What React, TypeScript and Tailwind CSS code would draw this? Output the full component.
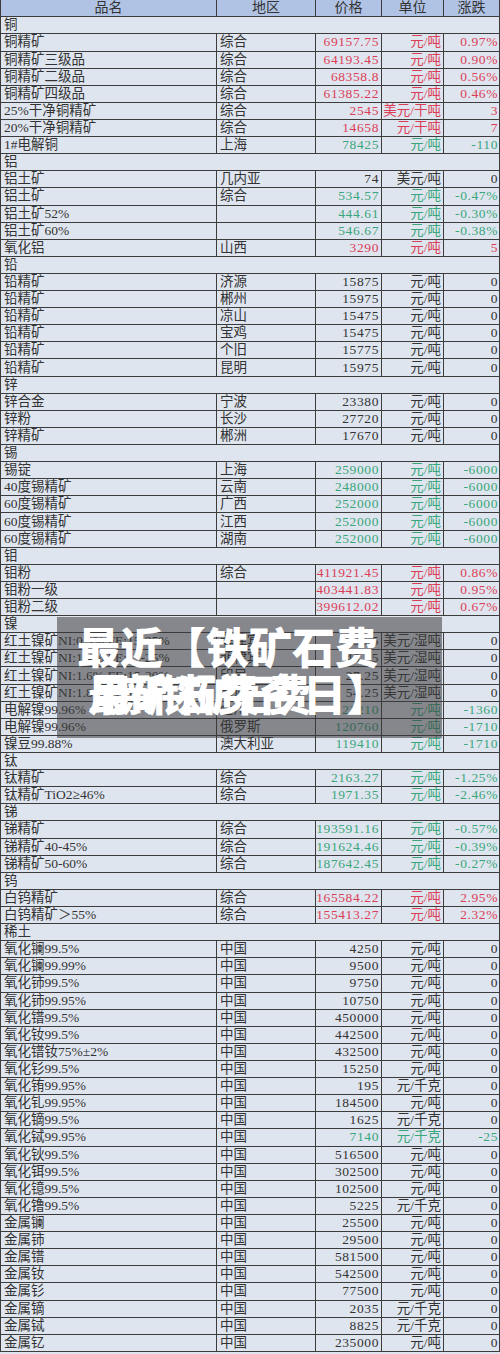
type Tone = "up" | "down" | "flat";

interface Item {
  name: string;
  region: string;
  price: string;
  unit: string;
  change: string;
  tone: Tone;
}

interface Group {
  title: string;
  items: Item[];
}

const t = (name: string, region: string, price: string, unit: string, change: string, tone: Tone = "flat"): Item => ({
  name,
  region,
  price,
  unit,
  change,
  tone,
});

const groups: Group[] = [
  {
    title: "铜",
    items: [
      t("铜精矿", "综合", "69157.75", "元/吨", "0.97%", "up"),
      t("铜精矿三级品", "综合", "64193.45", "元/吨", "0.90%", "up"),
      t("铜精矿二级品", "综合", "68358.8", "元/吨", "0.56%", "up"),
      t("铜精矿四级品", "综合", "61385.22", "元/吨", "0.46%", "up"),
      t("25%干净铜精矿", "综合", "2545", "美元/干吨", "3", "up"),
      t("20%干净铜精矿", "综合", "14658", "元/干吨", "7", "up"),
      t("1#电解铜", "上海", "78425", "元/吨", "-110", "down"),
    ],
  },
  {
    title: "铝",
    items: [
      t("铝土矿", "几内亚", "74", "美元/吨", "0"),
      t("铝土矿", "综合", "534.57", "元/吨", "-0.47%", "down"),
      t("铝土矿52%", "", "444.61", "元/吨", "-0.30%", "down"),
      t("铝土矿60%", "", "546.67", "元/吨", "-0.38%", "down"),
      t("氧化铝", "山西", "3290", "元/吨", "5", "up"),
    ],
  },
  {
    title: "铅",
    items: [
      t("铅精矿", "济源", "15875", "元/吨", "0"),
      t("铅精矿", "郴州", "15975", "元/吨", "0"),
      t("铅精矿", "凉山", "15475", "元/吨", "0"),
      t("铅精矿", "宝鸡", "15475", "元/吨", "0"),
      t("铅精矿", "个旧", "15775", "元/吨", "0"),
      t("铅精矿", "昆明", "15975", "元/吨", "0"),
    ],
  },
  {
    title: "锌",
    items: [
      t("锌合金", "宁波", "23380", "元/吨", "0"),
      t("锌粉", "长沙", "27720", "元/吨", "0"),
      t("锌精矿", "郴洲", "17670", "元/吨", "0"),
    ],
  },
  {
    title: "锡",
    items: [
      t("锡锭", "上海", "259000", "元/吨", "-6000", "down"),
      t("40度锡精矿", "云南", "248000", "元/吨", "-6000", "down"),
      t("60度锡精矿", "广西", "252000", "元/吨", "-6000", "down"),
      t("60度锡精矿", "江西", "252000", "元/吨", "-6000", "down"),
      t("60度锡精矿", "湖南", "252000", "元/吨", "-6000", "down"),
    ],
  },
  {
    title: "钼",
    items: [
      t("钼粉", "综合", "411921.45", "元/吨", "0.86%", "up"),
      t("钼粉一级", "", "403441.83", "元/吨", "0.95%", "up"),
      t("钼粉二级", "", "399612.02", "元/吨", "0.67%", "up"),
    ],
  },
  {
    title: "镍",
    items: [
      t("红土镍矿NI:0.9% FE:15-25%", "菲律宾", "36.5", "美元/湿吨", "0"),
      t("红土镍矿NI:1.4% FE:15-25%", "菲律宾", "48.25", "美元/湿吨", "0"),
      t("红土镍矿NI:1.6% FE:15-20%", "印尼", "27.25", "美元/湿吨", "0"),
      t("红土镍矿NI:1.8% FE:15-20%", "印尼", "54.25", "美元/湿吨", "0"),
      t("电解镍99.96%", "金川", "122210", "元/吨", "-1360", "down"),
      t("电解镍99.96%", "俄罗斯", "120760", "元/吨", "-1710", "down"),
      t("镍豆99.88%", "澳大利亚", "119410", "元/吨", "-1710", "down"),
    ],
  },
  {
    title: "钛",
    items: [
      t("钛精矿", "综合", "2163.27", "元/吨", "-1.25%", "down"),
      t("钛精矿TiO2≥46%", "综合", "1971.35", "元/吨", "-2.46%", "down"),
    ],
  },
  {
    title: "锑",
    items: [
      t("锑精矿", "综合", "193591.16", "元/吨", "-0.57%", "down"),
      t("锑精矿40-45%", "综合", "191624.46", "元/吨", "-0.39%", "down"),
      t("锑精矿50-60%", "综合", "187642.45", "元/吨", "-0.27%", "down"),
    ],
  },
  {
    title: "钨",
    items: [
      t("白钨精矿", "综合", "165584.22", "元/吨", "2.95%", "up"),
      t("白钨精矿＞55%", "综合", "155413.27", "元/吨", "2.32%", "up"),
    ],
  },
  {
    title: "稀土",
    items: [
      t("氧化镧99.5%", "中国", "4250", "元/吨", "0"),
      t("氧化镧99.99%", "中国", "9500", "元/吨", "0"),
      t("氧化铈99.5%", "中国", "9750", "元/吨", "0"),
      t("氧化铈99.95%", "中国", "10750", "元/吨", "0"),
      t("氧化镨99.5%", "中国", "450000", "元/吨", "0"),
      t("氧化钕99.5%", "中国", "442500", "元/吨", "0"),
      t("氧化镨钕75%±2%", "中国", "432500", "元/吨", "0"),
      t("氧化钐99.5%", "中国", "15250", "元/吨", "0"),
      t("氧化铕99.95%", "中国", "195", "元/千克", "0"),
      t("氧化钆99.95%", "中国", "184500", "元/吨", "0"),
      t("氧化镝99.5%", "中国", "1625", "元/千克", "0"),
      t("氧化铽99.95%", "中国", "7140", "元/千克", "-25", "down"),
      t("氧化钬99.5%", "中国", "516500", "元/吨", "0"),
      t("氧化铒99.5%", "中国", "302500", "元/吨", "0"),
      t("氧化镱99.5%", "中国", "102500", "元/吨", "0"),
      t("氧化镥99.5%", "中国", "5225", "元/千克", "0"),
      t("金属镧", "中国", "25500", "元/吨", "0"),
      t("金属铈", "中国", "29500", "元/吨", "0"),
      t("金属镨", "中国", "581500", "元/吨", "0"),
      t("金属钕", "中国", "542500", "元/吨", "0"),
      t("金属钐", "中国", "77500", "元/吨", "0"),
      t("金属镝", "中国", "2035", "元/千克", "0"),
      t("金属铽", "中国", "8825", "元/千克", "0"),
      t("金属钇", "中国", "235000", "元/吨", "0"),
    ],
  },
];

const toneClass: Record<Tone, string> = {
  up: "text-[#dc3d56]",
  down: "text-[#3aa67b]",
  flat: "text-[#333]",
};

const cols = "grid grid-cols-[216px_99px_66px_62px_55px]";
const cell = "flex items-center overflow-hidden whitespace-nowrap border-r border-[#3c3c3c]";

function Row({ item }: { item: Item }) {
  const color = toneClass[item.tone];
  return (
    <div className={`${cols} h-[17.12px] border-b border-[#3c3c3c] leading-[16px]`}>
      <div className={`${cell} pl-[3px] text-[#333]`}>{item.name}</div>
      <div className={`${cell} pl-[3px] text-[#333]`}>{item.region}</div>
      <div className={`${cell} justify-end pr-[2px] tracking-[0.6px] ${color}`}>{item.price}</div>
      <div className={`${cell} justify-end pr-[2px] ${color}`}>{item.unit}</div>
      <div className={`flex items-center justify-end overflow-hidden whitespace-nowrap pr-[1px] tracking-[0.6px] ${color}`}>
        {item.change}
      </div>
    </div>
  );
}

export default function App() {
  return (
    <div
      className="relative h-[1354px] w-[500px] overflow-hidden bg-[#dfe5ef] text-[13.5px] text-[#333]"
      style={{ fontFamily: '"Liberation Serif", "Noto Sans CJK SC", serif' }}
    >
      <div className="border-x border-[#3c3c3c]">
        <div className={`${cols} h-[17.3px] border-b border-[#3c3c3c] bg-[#b1c3e5] text-[14px] leading-[16px]`}>
          {["品名", "地区", "价格", "单位"].map((h) => (
            <div key={h} className={`${cell} justify-center`}>
              {h}
            </div>
          ))}
          <div className="flex items-center justify-center">涨跌</div>
        </div>
        {groups.map((g) => (
          <div key={g.title}>
            <div className="flex h-[17.12px] items-center border-b border-[#3c3c3c] pl-[3px] leading-[16px]">{g.title}</div>
            {g.items.map((item, i) => (
              <Row key={g.title + i} item={item} />
            ))}
          </div>
        ))}
      </div>

      <div
        className="absolute left-[57px] top-[617px] h-[121px] w-[385px] bg-[#3a3a3a]/55 text-white"
        style={{ fontFamily: '"Noto Sans CJK SC", sans-serif' }}
      >
        <div className="absolute left-[20px] top-[5px] whitespace-nowrap text-[43px] font-black leading-[46px]">最近【铁矿石费</div>
        <div className="absolute left-[31px] top-[52px] whitespace-nowrap text-[43px] font-black leading-[46px]">用矿石费今日】</div>
        <div className="absolute left-[31px] top-[52px] whitespace-nowrap text-[43px] font-black leading-[46px] tracking-[-7px]">最新铁矿石费</div>
      </div>
    </div>
  );
}
